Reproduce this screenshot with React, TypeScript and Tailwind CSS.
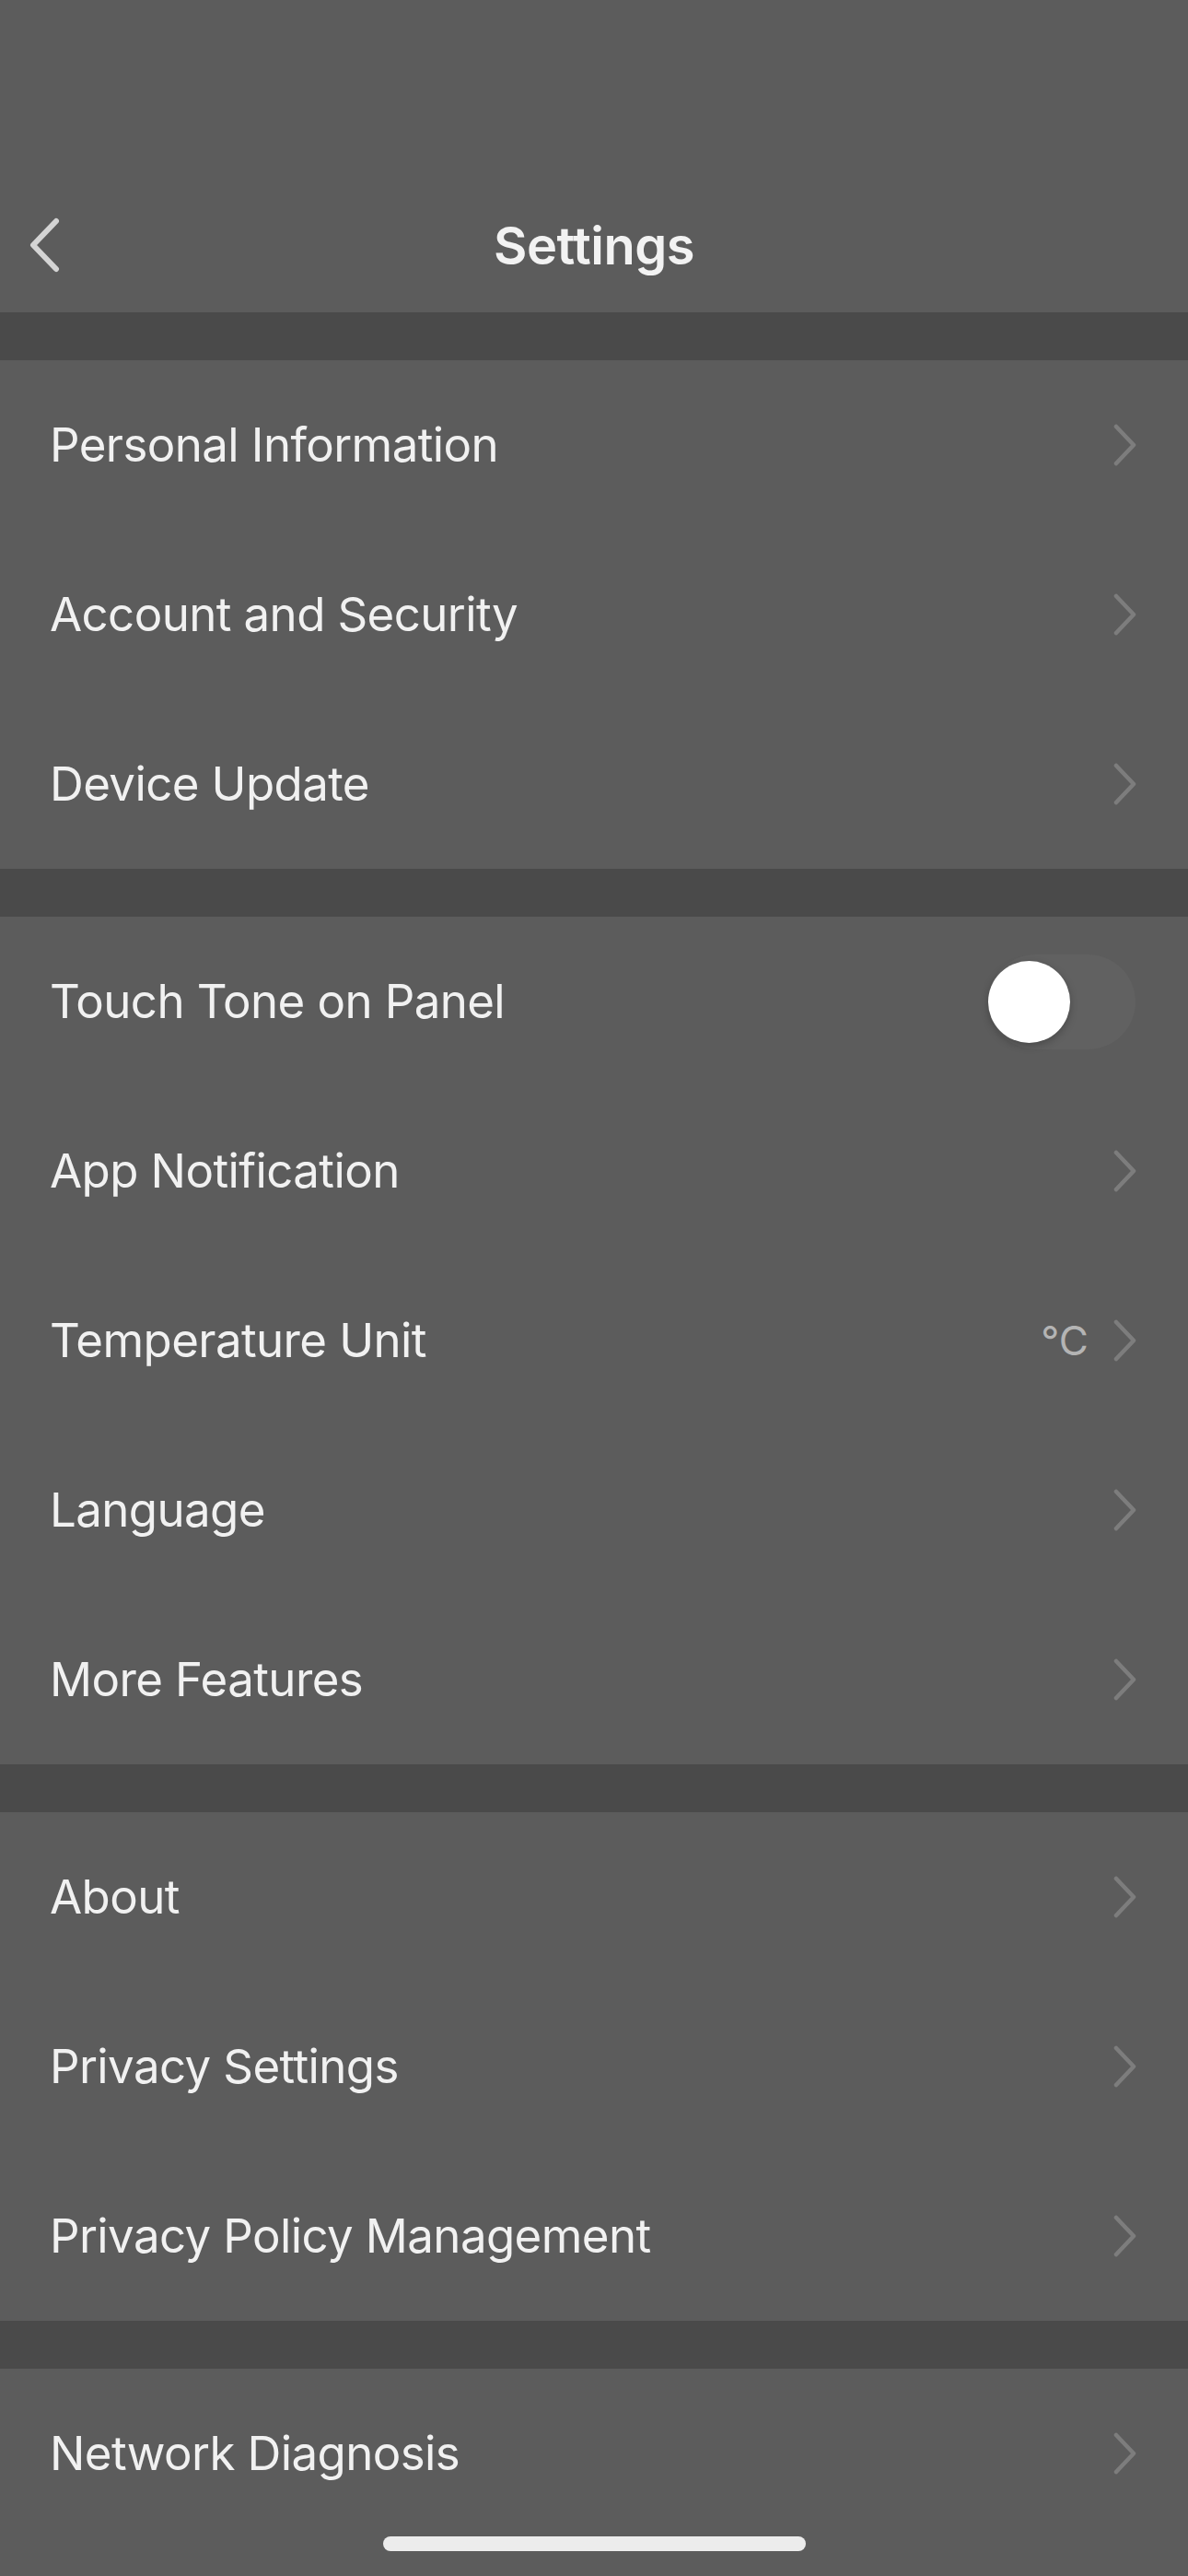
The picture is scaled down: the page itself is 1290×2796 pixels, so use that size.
import React from "react";

const Chevron = () => (
  <svg width="28" height="46" viewBox="0 0 28 46" className="shrink-0">
    <path d="M4 3 L23 23 L4 43" fill="none" stroke="#7d7d7d" strokeWidth="4.5" strokeLinecap="round" strokeLinejoin="round" />
  </svg>
);

type Row = { label: string; kind?: "chev" | "toggle" | "unit" };

const groups: Row[][] = [
  [{ label: "Personal Information" }, { label: "Account and Security" }, { label: "Device Update" }],
  [
    { label: "Touch Tone on Panel", kind: "toggle" },
    { label: "App Notification" },
    { label: "Temperature Unit", kind: "unit" },
    { label: "Language" },
    { label: "More Features" },
  ],
  [{ label: "About" }, { label: "Privacy Settings" }, { label: "Privacy Policy Management" }],
  [{ label: "Network Diagnosis" }],
];

function Item({ row }: { row: Row }) {
  return (
    <div className="h-[184px] flex items-center justify-between pl-[54px] pr-[54px]">
      <span className="text-[51px] text-[#f1f1f1] tracking-[-0.6px]">{row.label}</span>
      {row.kind === "toggle" ? (
        <div className="relative w-[160px] h-[103px] rounded-full bg-[#616161] mr-[3px]">
          <div className="absolute left-0 top-[7px] w-[89px] h-[89px] rounded-full bg-white shadow-[0_3px_8px_rgba(0,0,0,0.25)]" />
        </div>
      ) : row.kind === "unit" ? (
        <div className="flex items-center gap-[26px]">
          <span className="text-[44px] text-[#b4b4b4]">°C</span>
          <Chevron />
        </div>
      ) : (
        <Chevron />
      )}
    </div>
  );
}

export default function App() {
  return (
    <div className="w-[1290px] h-[2796px] bg-[#5c5c5c] flex flex-col relative overflow-hidden" style={{ fontFamily: "Inter, 'Noto Sans', sans-serif" }}>
      <div className="h-[194px]" />
      <div className="h-[145px] relative flex items-center justify-center">
        <svg width="40" height="64" viewBox="0 0 40 64" className="absolute left-[28px] top-[40px]">
          <path d="M33 6 L8 32 L33 58" fill="none" stroke="#d4d4d4" strokeWidth="6" strokeLinecap="round" strokeLinejoin="round" />
        </svg>
        <span className="text-[56px] font-semibold text-[#f2f2f2] tracking-[-0.5px]">Settings</span>
      </div>
      {groups.map((g, i) => (
        <div key={i}>
          <div className="h-[52px] bg-[#4a4a4a]" />
          {g.map((r) => (
            <Item key={r.label} row={r} />
          ))}
        </div>
      ))}
      <div className="absolute left-[416px] top-[2753px] w-[459px] h-[16px] rounded-full bg-[#ececec]" />
    </div>
  );
}
